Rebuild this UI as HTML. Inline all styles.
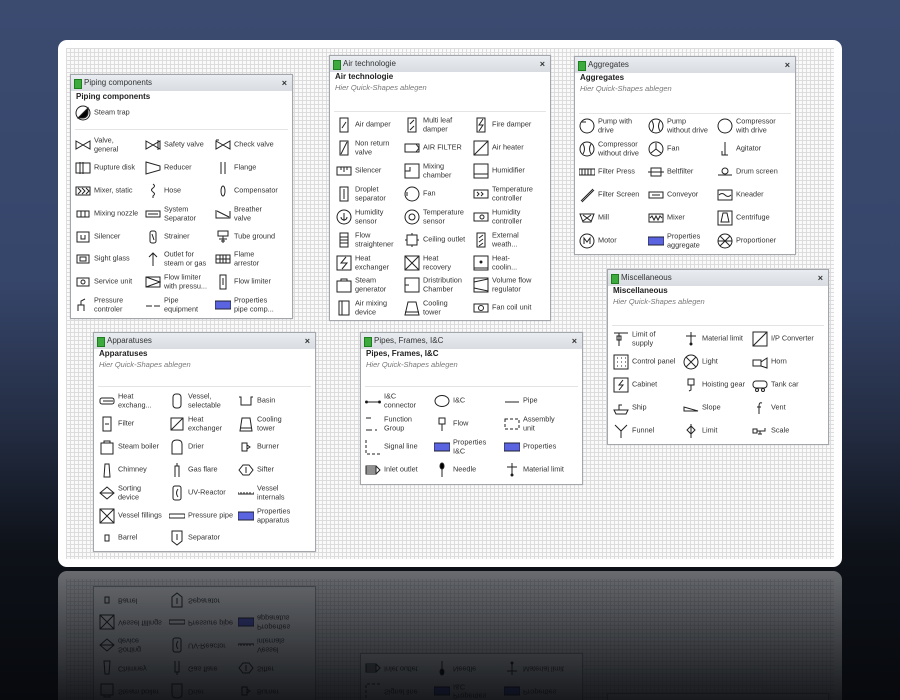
<!DOCTYPE html>
<html><head><meta charset="utf-8"><style>
*{margin:0;padding:0;box-sizing:border-box}
html,body{width:900px;height:700px;overflow:hidden}
body{background:linear-gradient(180deg,#3b4b70 0%,#36456a 40%,#222b40 62%,#0e1219 78%,#07090d 100%);font-family:"Liberation Sans",sans-serif;position:relative}
.card{position:absolute;left:58px;top:40px;width:784px;height:527px;background:#fff;border-radius:9px;
-webkit-box-reflect:below 4px linear-gradient(transparent 70%,rgba(0,0,0,.38) 100%)}
.grid{position:absolute;left:8px;top:8px;right:8px;bottom:8px;background-color:#fafafa;
background-image:linear-gradient(#dcdcdc 1px,transparent 1px),linear-gradient(90deg,#dcdcdc 1px,transparent 1px);background-size:4px 4px}
.p{position:absolute;background:#fff;border:1px solid #a3a6ab;box-shadow:0 0 1px #bbb}
.tb{height:16px;background:linear-gradient(#e9ecf0,#d8dce2);font-size:8px;line-height:16px;padding-left:13px;color:#333;position:relative}
.tb:before{content:"";position:absolute;left:3px;top:4px;width:6px;height:8px;background:#3daa3d;border:1px solid #1e7d1e}
.tb b{position:absolute;right:5px;top:0;font-weight:bold;font-size:9px}
.h{position:absolute;left:5px;top:18px;font-size:8px;font-weight:bold;color:#222}
.s{position:absolute;left:5px;top:29px;font-size:7.5px;font-style:italic;color:#777}
.sep{position:absolute;left:4px;right:4px;height:1px;background:#e4e4e4}
.it{position:absolute;height:18px;width:72px}
.it svg{position:absolute;left:0;top:1px;width:16px;height:16px;fill:none;stroke:#222;stroke-width:1}
.it span{position:absolute;left:19px;top:50%;transform:translateY(-50%);font-size:7.3px;line-height:8.6px;color:#333;white-space:nowrap}
.bl{fill:#5a63e0!important;stroke:#223!important}
</style></head><body>
<div class="card"><div class="grid"></div>

<!-- Piping components -->
<div class="p" style="left:12px;top:34px;width:223px;height:245px">
<div class="tb">Piping components<b>×</b></div>
<div class="h" style="top:17px">Piping components</div>
<div class="it" style="left:4px;top:29px"><svg viewBox="0 0 16 16"><circle cx="8" cy="8" r="7"/><path d="M3 13L13 3L13 8A5 5 0 0 1 8 13Z" fill="#000"/></svg><span>Steam trap</span></div>
<div class="sep" style="top:54px"></div>
<div class="it" style="left:4px;top:61px"><svg viewBox="0 0 16 16"><path d="M1 4L15 12V4L1 12Z"/></svg><span>Valve,<br>general</span></div>
<div class="it" style="left:74px;top:61px"><svg viewBox="0 0 16 16"><path d="M1 4L15 12V4L1 12Z M13 3v10"/></svg><span>Safety valve</span></div>
<div class="it" style="left:144px;top:61px"><svg viewBox="0 0 16 16"><path d="M1 4L15 12V4L1 12Z M1 3h3"/></svg><span>Check valve</span></div>
<div class="it" style="left:4px;top:84px"><svg viewBox="0 0 16 16"><rect x="1" y="3" width="14" height="10"/><path d="M5 2v12M8 2v12"/></svg><span>Rupture disk</span></div>
<div class="it" style="left:74px;top:84px"><svg viewBox="0 0 16 16"><path d="M1 2L15 6V10L1 14Z"/></svg><span>Reducer</span></div>
<div class="it" style="left:144px;top:84px"><svg viewBox="0 0 16 16"><path d="M6 2v12M10 2v12"/></svg><span>Flange</span></div>
<div class="it" style="left:4px;top:107px"><svg viewBox="0 0 16 16"><rect x="1" y="4" width="14" height="8"/><path d="M3 5l3 3-3 3M7 5l3 3-3 3M11 5l3 3-3 3"/></svg><span>Mixer, static</span></div>
<div class="it" style="left:74px;top:107px"><svg viewBox="0 0 16 16"><path d="M8 1q3 2 0 4q-3 2 0 4q3 2 0 4v2"/></svg><span>Hose</span></div>
<div class="it" style="left:144px;top:107px"><svg viewBox="0 0 16 16"><ellipse cx="8" cy="8" rx="2" ry="5"/></svg><span>Compensator</span></div>
<div class="it" style="left:4px;top:130px"><svg viewBox="0 0 16 16"><rect x="2" y="5" width="12" height="6"/><path d="M6 5v6M10 5v6"/></svg><span>Mixing nozzle</span></div>
<div class="it" style="left:74px;top:130px"><svg viewBox="0 0 16 16"><rect x="1" y="5" width="14" height="6"/><path d="M3 8h10"/></svg><span>System<br>Separator</span></div>
<div class="it" style="left:144px;top:130px"><svg viewBox="0 0 16 16"><path d="M1 4v8h14V5M2 5l12 6"/></svg><span>Breather<br>valve</span></div>
<div class="it" style="left:4px;top:153px"><svg viewBox="0 0 16 16"><rect x="2" y="3" width="12" height="10"/><path d="M6 6v4h4V6"/></svg><span>Silencer</span></div>
<div class="it" style="left:74px;top:153px"><svg viewBox="0 0 16 16"><rect x="5" y="2" width="6" height="12" rx="2"/><path d="M7 5l2 6"/></svg><span>Strainer</span></div>
<div class="it" style="left:144px;top:153px"><svg viewBox="0 0 16 16"><rect x="3" y="2" width="10" height="5"/><path d="M8 7v7M4 10h8M6 12h4"/></svg><span>Tube ground</span></div>
<div class="it" style="left:4px;top:175px"><svg viewBox="0 0 16 16"><rect x="2" y="4" width="12" height="8"/><rect x="5" y="6" width="6" height="4"/></svg><span>Sight glass</span></div>
<div class="it" style="left:74px;top:175px"><svg viewBox="0 0 16 16"><path d="M8 15V2M4 6l4-4 4 4"/></svg><span>Outlet for<br>steam or gas</span></div>
<div class="it" style="left:144px;top:175px"><svg viewBox="0 0 16 16"><rect x="1" y="4" width="14" height="8"/><path d="M1 8h14M5 4v8M8 4v8M11 4v8"/></svg><span>Flame<br>arrestor</span></div>
<div class="it" style="left:4px;top:198px"><svg viewBox="0 0 16 16"><rect x="2" y="4" width="12" height="8"/><circle cx="8" cy="8" r="2"/></svg><span>Service unit</span></div>
<div class="it" style="left:74px;top:198px"><svg viewBox="0 0 16 16"><rect x="1" y="3" width="14" height="10"/><path d="M1 3l14 5-14 5"/></svg><span>Flow limiter<br>with pressu...</span></div>
<div class="it" style="left:144px;top:198px"><svg viewBox="0 0 16 16"><rect x="5" y="1" width="6" height="14"/><path d="M8 4v7"/></svg><span>Flow limiter</span></div>
<div class="it" style="left:4px;top:221px"><svg viewBox="0 0 16 16"><path d="M3 14V8h6v6M6 8V4l4-2"/></svg><span>Pressure<br>controler</span></div>
<div class="it" style="left:74px;top:221px"><svg viewBox="0 0 16 16"><path d="M1 9h6M9 9h6"/></svg><span>Pipe<br>equipment</span></div>
<div class="it" style="left:144px;top:221px"><svg viewBox="0 0 16 16"><rect class="bl" x="0" y="4" width="16" height="8"/></svg><span>Properties<br>pipe comp...</span></div>
</div>

<!-- Air technologie -->
<div class="p" style="left:271px;top:15px;width:222px;height:266px">
<div class="tb">Air technologie<b>×</b></div>
<div class="h" style="top:16px">Air technologie</div>
<div class="s" style="top:27px">Hier Quick-Shapes ablegen</div>
<div class="sep" style="top:55px"></div>
<div class="it" style="left:6px;top:60px"><svg viewBox="0 0 16 16"><rect x="4" y="1" width="8" height="14"/><path d="M6 11l4-6"/></svg><span>Air damper</span></div>
<div class="it" style="left:74px;top:60px"><svg viewBox="0 0 16 16"><rect x="4" y="1" width="8" height="14"/><path d="M6 7l4-4M6 13l4-4"/></svg><span>Multi leaf<br>damper</span></div>
<div class="it" style="left:143px;top:60px"><svg viewBox="0 0 16 16"><rect x="4" y="1" width="8" height="14"/><path d="M10 2L6 8h4l-4 6"/></svg><span>Fire damper</span></div>
<div class="it" style="left:6px;top:83px"><svg viewBox="0 0 16 16"><rect x="4" y="1" width="8" height="14"/><path d="M5 14l6-12"/></svg><span>Non return<br>valve</span></div>
<div class="it" style="left:74px;top:83px"><svg viewBox="0 0 16 16"><rect x="1" y="4" width="14" height="8"/><path d="M12 4l3 4-3 4"/></svg><span>AIR FILTER</span></div>
<div class="it" style="left:143px;top:83px"><svg viewBox="0 0 16 16"><rect x="1" y="1" width="14" height="14"/><path d="M1 15L15 1"/></svg><span>Air heater</span></div>
<div class="it" style="left:6px;top:106px"><svg viewBox="0 0 16 16"><rect x="1" y="4" width="14" height="8"/><path d="M5 4v3M8 4v5M11 4v3"/></svg><span>Silencer</span></div>
<div class="it" style="left:74px;top:106px"><svg viewBox="0 0 16 16"><rect x="1" y="1" width="14" height="14"/><path d="M1 8h5V4"/></svg><span>Mixing<br>chamber</span></div>
<div class="it" style="left:143px;top:106px"><svg viewBox="0 0 16 16"><rect x="1" y="1" width="14" height="14"/><path d="M1 11h14"/></svg><span>Humidifier</span></div>
<div class="it" style="left:6px;top:129px"><svg viewBox="0 0 16 16"><rect x="4" y="1" width="8" height="14"/><path d="M8 3v10"/></svg><span>Droplet<br>separator</span></div>
<div class="it" style="left:74px;top:129px"><svg viewBox="0 0 16 16"><circle cx="8" cy="8" r="7"/><path d="M3 6v4"/></svg><span>Fan</span></div>
<div class="it" style="left:143px;top:129px"><svg viewBox="0 0 16 16"><rect x="1" y="4" width="14" height="8"/><path d="M4 6l2 2-2 2M8 6l2 2-2 2"/></svg><span>Temperature<br>controller</span></div>
<div class="it" style="left:6px;top:152px"><svg viewBox="0 0 16 16"><circle cx="8" cy="8" r="7"/><path d="M8 4v8M5 8a3 3 0 0 0 6 0"/></svg><span>Humidity<br>sensor</span></div>
<div class="it" style="left:74px;top:152px"><svg viewBox="0 0 16 16"><circle cx="8" cy="8" r="7"/><circle cx="8" cy="8" r="3"/></svg><span>Temperature<br>sensor</span></div>
<div class="it" style="left:143px;top:152px"><svg viewBox="0 0 16 16"><rect x="1" y="4" width="14" height="8"/><circle cx="9" cy="8" r="2"/></svg><span>Humidity<br>controller</span></div>
<div class="it" style="left:6px;top:175px"><svg viewBox="0 0 16 16"><rect x="4" y="1" width="8" height="14"/><path d="M4 5h8M4 8h8M4 11h8"/></svg><span>Flow<br>straightener</span></div>
<div class="it" style="left:74px;top:175px"><svg viewBox="0 0 16 16"><rect x="3" y="3" width="10" height="10"/><path d="M8 1v2M8 13v2M1 8h2M13 8h2"/></svg><span>Ceiling outlet</span></div>
<div class="it" style="left:143px;top:175px"><svg viewBox="0 0 16 16"><rect x="4" y="1" width="8" height="14"/><path d="M6 6l4-3M6 10l4-3M6 14l4-3"/></svg><span>External<br>weath...</span></div>
<div class="it" style="left:6px;top:198px"><svg viewBox="0 0 16 16"><rect x="1" y="1" width="14" height="14"/><path d="M10 2L5 8h6l-5 6"/></svg><span>Heat<br>exchanger</span></div>
<div class="it" style="left:74px;top:198px"><svg viewBox="0 0 16 16"><rect x="1" y="1" width="14" height="14"/><path d="M1 1l14 14M15 1L1 15"/></svg><span>Heat<br>recovery</span></div>
<div class="it" style="left:143px;top:198px"><svg viewBox="0 0 16 16"><rect x="1" y="1" width="14" height="14"/><path d="M1 13h14"/><circle cx="8" cy="7" r="1" fill="#000"/></svg><span>Heat-<br>coolin...</span></div>
<div class="it" style="left:6px;top:220px"><svg viewBox="0 0 16 16"><rect x="1" y="4" width="14" height="11"/><path d="M5 4V2h6v2"/></svg><span>Steam<br>generator</span></div>
<div class="it" style="left:74px;top:220px"><svg viewBox="0 0 16 16"><rect x="1" y="1" width="14" height="14"/><path d="M1 8h4"/></svg><span>Dristribution<br>Chamber</span></div>
<div class="it" style="left:143px;top:220px"><svg viewBox="0 0 16 16"><rect x="1" y="1" width="14" height="14"/><path d="M1 5l14-3M1 11l14 3"/></svg><span>Volume flow<br>regulator</span></div>
<div class="it" style="left:6px;top:243px"><svg viewBox="0 0 16 16"><rect x="3" y="1" width="10" height="14"/><path d="M6 1v14"/></svg><span>Air mixing<br>device</span></div>
<div class="it" style="left:74px;top:243px"><svg viewBox="0 0 16 16"><path d="M1 15h14L12 2H4ZM1 12h14"/></svg><span>Cooling<br>tower</span></div>
<div class="it" style="left:143px;top:243px"><svg viewBox="0 0 16 16"><rect x="1" y="4" width="14" height="8"/><circle cx="8" cy="8" r="2.5"/></svg><span>Fan coil unit</span></div>
</div>

<!-- Aggregates -->
<div class="p" style="left:516px;top:16px;width:222px;height:199px">
<div class="tb">Aggregates<b>×</b></div>
<div class="h" style="top:16px">Aggregates</div>
<div class="s" style="top:27px">Hier Quick-Shapes ablegen</div>
<div class="sep" style="top:56px"></div>
<div class="it" style="left:4px;top:60px"><svg viewBox="0 0 16 16"><circle cx="8" cy="8" r="7"/><path d="M2 4h5"/></svg><span>Pump with<br>drive</span></div>
<div class="it" style="left:73px;top:60px"><svg viewBox="0 0 16 16"><circle cx="8" cy="8" r="7"/><path d="M4 3q3 5 0 10M12 3q-3 5 0 10"/></svg><span>Pump<br>without drive</span></div>
<div class="it" style="left:142px;top:60px"><svg viewBox="0 0 16 16"><circle cx="8" cy="8" r="7"/></svg><span>Compressor<br>with drive</span></div>
<div class="it" style="left:4px;top:83px"><svg viewBox="0 0 16 16"><circle cx="8" cy="8" r="7"/><path d="M4 3q3 5 0 10M12 3q-3 5 0 10"/></svg><span>Compressor<br>without drive</span></div>
<div class="it" style="left:73px;top:83px"><svg viewBox="0 0 16 16"><circle cx="8" cy="8" r="7"/><path d="M8 8V2M8 8l5 4M8 8l-5 4"/></svg><span>Fan</span></div>
<div class="it" style="left:142px;top:83px"><svg viewBox="0 0 16 16"><path d="M8 1v13M5 10v4h6"/></svg><span>Agitator</span></div>
<div class="it" style="left:4px;top:106px"><svg viewBox="0 0 16 16"><rect x="0" y="5" width="16" height="6"/><path d="M3 5v6M6 5v6M9 5v6M12 5v6"/></svg><span>Filter Press</span></div>
<div class="it" style="left:73px;top:106px"><svg viewBox="0 0 16 16"><rect x="3" y="4" width="10" height="8"/><path d="M0 8h16"/></svg><span>Beltfilter</span></div>
<div class="it" style="left:142px;top:106px"><svg viewBox="0 0 16 16"><circle cx="8" cy="7" r="3"/><path d="M1 11h14"/></svg><span>Drum screen</span></div>
<div class="it" style="left:4px;top:129px"><svg viewBox="0 0 16 16"><path d="M2 14L14 2M3 15L15 3"/></svg><span>Filter Screen</span></div>
<div class="it" style="left:73px;top:129px"><svg viewBox="0 0 16 16"><rect x="1" y="5" width="14" height="6"/><path d="M4 8h8"/></svg><span>Conveyor</span></div>
<div class="it" style="left:142px;top:129px"><svg viewBox="0 0 16 16"><rect x="1" y="3" width="14" height="10"/><path d="M2 8q3-3 6 0t6 0"/></svg><span>Kneader</span></div>
<div class="it" style="left:4px;top:152px"><svg viewBox="0 0 16 16"><path d="M1 4h14l-3 8H4Z M4 5l8 6M12 5l-8 6"/></svg><span>Mill</span></div>
<div class="it" style="left:73px;top:152px"><svg viewBox="0 0 16 16"><rect x="1" y="4" width="14" height="8"/><path d="M2 8l2-2 2 4 2-4 2 4 2-4 2 2"/></svg><span>Mixer</span></div>
<div class="it" style="left:142px;top:152px"><svg viewBox="0 0 16 16"><rect x="1" y="1" width="14" height="14"/><path d="M6 3h4l2 9H4Z"/></svg><span>Centrifuge</span></div>
<div class="it" style="left:4px;top:175px"><svg viewBox="0 0 16 16"><circle cx="8" cy="8" r="7"/><path d="M5 11V5l3 4 3-4v6"/></svg><span>Motor</span></div>
<div class="it" style="left:73px;top:175px"><svg viewBox="0 0 16 16"><rect class="bl" x="0" y="4" width="16" height="8"/></svg><span>Properties<br>aggregate</span></div>
<div class="it" style="left:142px;top:175px"><svg viewBox="0 0 16 16"><circle cx="8" cy="8" r="7"/><path d="M3 3l10 10M13 3L3 13M1 8h14"/></svg><span>Proportioner</span></div>
</div>

<!-- Miscellaneous -->
<div class="p" style="left:549px;top:229px;width:222px;height:176px">
<div class="tb">Miscellaneous<b>×</b></div>
<div class="h" style="top:16px">Miscellaneous</div>
<div class="s" style="top:27px">Hier Quick-Shapes ablegen</div>
<div class="sep" style="top:55px"></div>
<div class="it" style="left:5px;top:60px"><svg viewBox="0 0 16 16"><path d="M1 2h14M6 2v13M4 5h4v4H4Z"/></svg><span>Limit of<br>supply</span></div>
<div class="it" style="left:75px;top:60px"><svg viewBox="0 0 16 16"><path d="M8 1v12M3 5h10"/><circle cx="8" cy="13" r="1" fill="#000"/></svg><span>Material limit</span></div>
<div class="it" style="left:144px;top:60px"><svg viewBox="0 0 16 16"><rect x="1" y="1" width="14" height="14"/><path d="M1 15L15 1"/></svg><span>I/P Converter</span></div>
<div class="it" style="left:5px;top:83px"><svg viewBox="0 0 16 16"><rect x="1" y="1" width="14" height="14"/><path d="M4 4h1M8 4h1M12 4h1M4 8h1M8 8h1M12 8h1M4 12h1M8 12h1M12 12h1"/></svg><span>Control panel</span></div>
<div class="it" style="left:75px;top:83px"><svg viewBox="0 0 16 16"><circle cx="8" cy="8" r="7"/><path d="M3 3l10 10M13 3L3 13"/></svg><span>Light</span></div>
<div class="it" style="left:144px;top:83px"><svg viewBox="0 0 16 16"><rect x="1" y="6" width="8" height="6"/><path d="M9 8l6-4v10l-6-2"/></svg><span>Horn</span></div>
<div class="it" style="left:5px;top:106px"><svg viewBox="0 0 16 16"><rect x="1" y="1" width="14" height="14"/><path d="M10 3L6 8h4l-4 5"/></svg><span>Cabinet</span></div>
<div class="it" style="left:75px;top:106px"><svg viewBox="0 0 16 16"><path d="M5 2h6v6H5ZM8 8v5l-2 1"/></svg><span>Hoisting gear</span></div>
<div class="it" style="left:144px;top:106px"><svg viewBox="0 0 16 16"><rect x="1" y="4" width="14" height="7" rx="3"/><circle cx="5" cy="13" r="1.5"/><circle cx="11" cy="13" r="1.5"/></svg><span>Tank car</span></div>
<div class="it" style="left:5px;top:129px"><svg viewBox="0 0 16 16"><path d="M1 10h14l-2 4H3ZM6 10V5h3"/></svg><span>Ship</span></div>
<div class="it" style="left:75px;top:129px"><svg viewBox="0 0 16 16"><path d="M1 7v4h14Z"/></svg><span>Slope</span></div>
<div class="it" style="left:144px;top:129px"><svg viewBox="0 0 16 16"><path d="M10 3q-3-1-3 3v8M5 7h4"/></svg><span>Vent</span></div>
<div class="it" style="left:5px;top:152px"><svg viewBox="0 0 16 16"><path d="M2 2l6 6 6-6M8 8v7"/></svg><span>Funnel</span></div>
<div class="it" style="left:75px;top:152px"><svg viewBox="0 0 16 16"><path d="M8 1v14M8 3l4 4-4 4-4-4Z"/></svg><span>Limit</span></div>
<div class="it" style="left:144px;top:152px"><svg viewBox="0 0 16 16"><rect x="1" y="6" width="4" height="4"/><path d="M5 8h8V5M8 8v3M6 11h4"/></svg><span>Scale</span></div>
</div>

<!-- Apparatuses -->
<div class="p" style="left:35px;top:292px;width:223px;height:220px">
<div class="tb">Apparatuses<b>×</b></div>
<div class="h" style="top:16px">Apparatuses</div>
<div class="s" style="top:27px">Hier Quick-Shapes ablegen</div>
<div class="sep" style="top:53px"></div>
<div class="it" style="left:5px;top:59px"><svg viewBox="0 0 16 16"><rect x="1" y="5" width="14" height="6" rx="2"/><path d="M4 8h10"/></svg><span>Heat<br>exchang...</span></div>
<div class="it" style="left:75px;top:59px"><svg viewBox="0 0 16 16"><rect x="4" y="1" width="8" height="14" rx="3"/></svg><span>Vessel,<br>selectable</span></div>
<div class="it" style="left:144px;top:59px"><svg viewBox="0 0 16 16"><path d="M1 4h2v8h10V4h2"/></svg><span>Basin</span></div>
<div class="it" style="left:5px;top:82px"><svg viewBox="0 0 16 16"><rect x="4" y="1" width="8" height="14"/><path d="M6 8h4"/></svg><span>Filter</span></div>
<div class="it" style="left:75px;top:82px"><svg viewBox="0 0 16 16"><rect x="2" y="2" width="12" height="12"/><path d="M2 14L14 2"/></svg><span>Heat<br>exchanger</span></div>
<div class="it" style="left:144px;top:82px"><svg viewBox="0 0 16 16"><path d="M2 15h12L12 2H4ZM2 12h12"/></svg><span>Cooling<br>tower</span></div>
<div class="it" style="left:5px;top:105px"><svg viewBox="0 0 16 16"><rect x="2" y="4" width="12" height="11"/><path d="M5 4V2h6v2"/></svg><span>Steam boiler</span></div>
<div class="it" style="left:75px;top:105px"><svg viewBox="0 0 16 16"><path d="M3 15V5q0-4 5-4t5 4v10Z"/></svg><span>Drier</span></div>
<div class="it" style="left:144px;top:105px"><svg viewBox="0 0 16 16"><path d="M4 4h5v8H4ZM9 6l3 2-3 2"/></svg><span>Burner</span></div>
<div class="it" style="left:5px;top:128px"><svg viewBox="0 0 16 16"><path d="M5 15l1-13h4l1 13Z"/></svg><span>Chimney</span></div>
<div class="it" style="left:75px;top:128px"><svg viewBox="0 0 16 16"><path d="M6 15V4h4v11M8 4V1"/></svg><span>Gas flare</span></div>
<div class="it" style="left:144px;top:128px"><svg viewBox="0 0 16 16"><path d="M1 8l4-5h6l4 5-4 5H5ZM8 5v6"/></svg><span>Sifter</span></div>
<div class="it" style="left:5px;top:151px"><svg viewBox="0 0 16 16"><path d="M1 8l7-6 7 6-7 6ZM1 8h14"/></svg><span>Sorting<br>device</span></div>
<div class="it" style="left:75px;top:151px"><svg viewBox="0 0 16 16"><rect x="4" y="1" width="8" height="14" rx="2"/><path d="M9 4q-3 4 0 8"/></svg><span>UV-Reactor</span></div>
<div class="it" style="left:144px;top:151px"><svg viewBox="0 0 16 16"><path d="M0 7v2h16V7M3 7v2M6 7v2M9 7v2M12 7v2"/></svg><span>Vessel<br>internals</span></div>
<div class="it" style="left:5px;top:174px"><svg viewBox="0 0 16 16"><rect x="1" y="1" width="14" height="14"/><path d="M1 1l14 14M15 1L1 15"/></svg><span>Vessel fillings</span></div>
<div class="it" style="left:75px;top:174px"><svg viewBox="0 0 16 16"><rect x="0" y="6" width="16" height="4" rx="1"/></svg><span>Pressure pipe</span></div>
<div class="it" style="left:144px;top:174px"><svg viewBox="0 0 16 16"><rect class="bl" x="0" y="4" width="16" height="8"/></svg><span>Properties<br>apparatus</span></div>
<div class="it" style="left:5px;top:196px"><svg viewBox="0 0 16 16"><rect x="6" y="5" width="4" height="6"/></svg><span>Barrel</span></div>
<div class="it" style="left:75px;top:196px"><svg viewBox="0 0 16 16"><path d="M3 1h10v10l-5 4-5-4ZM8 4v6"/></svg><span>Separator</span></div>
</div>

<!-- Pipes, Frames, I&C -->
<div class="p" style="left:302px;top:292px;width:223px;height:153px">
<div class="tb">Pipes, Frames, I&amp;C<b>×</b></div>
<div class="h" style="top:16px">Pipes, Frames, I&amp;C</div>
<div class="s" style="top:27px">Hier Quick-Shapes ablegen</div>
<div class="sep" style="top:53px"></div>
<div class="it" style="left:4px;top:59px"><svg viewBox="0 0 16 16"><path d="M1 9h14"/><circle cx="1.5" cy="9" r="1" fill="#000"/><circle cx="14.5" cy="9" r="1" fill="#000"/></svg><span>I&amp;C<br>connector</span></div>
<div class="it" style="left:73px;top:59px"><svg viewBox="0 0 16 16"><ellipse cx="8" cy="8" rx="7" ry="5.5"/></svg><span>I&amp;C</span></div>
<div class="it" style="left:143px;top:59px"><svg viewBox="0 0 16 16"><path d="M1 9h14"/></svg><span>Pipe</span></div>
<div class="it" style="left:4px;top:82px"><svg viewBox="0 0 16 16"><path d="M1 2h5M1 14h6M10 14h2"/></svg><span>Function<br>Group</span></div>
<div class="it" style="left:73px;top:82px"><svg viewBox="0 0 16 16"><rect x="5" y="2" width="6" height="6"/><path d="M8 8v7"/></svg><span>Flow</span></div>
<div class="it" style="left:143px;top:82px"><svg viewBox="0 0 16 16" style="stroke-dasharray:3 2"><rect x="1" y="3" width="14" height="10"/></svg><span>Assembly<br>unit</span></div>
<div class="it" style="left:4px;top:105px"><svg viewBox="0 0 16 16" style="stroke-dasharray:3 2"><path d="M1 1v14h14"/></svg><span>Signal line</span></div>
<div class="it" style="left:73px;top:105px"><svg viewBox="0 0 16 16"><rect class="bl" x="0" y="4" width="16" height="8"/></svg><span>Properties<br>I&amp;C</span></div>
<div class="it" style="left:143px;top:105px"><svg viewBox="0 0 16 16"><rect class="bl" x="0" y="4" width="16" height="8"/></svg><span>Properties</span></div>
<div class="it" style="left:4px;top:128px"><svg viewBox="0 0 16 16"><rect x="1" y="4" width="10" height="8"/><path d="M1 6h10M1 8h10M1 10h10M11 4l4 4-4 4"/></svg><span>Inlet outlet</span></div>
<div class="it" style="left:73px;top:128px"><svg viewBox="0 0 16 16"><path d="M8 7v8"/><ellipse cx="8" cy="4" rx="2" ry="3" fill="#000"/></svg><span>Needle</span></div>
<div class="it" style="left:143px;top:128px"><svg viewBox="0 0 16 16"><path d="M8 1v12M3 5h10"/><circle cx="8" cy="13" r="1" fill="#000"/></svg><span>Material limit</span></div>
</div>

</div>
</body></html>
